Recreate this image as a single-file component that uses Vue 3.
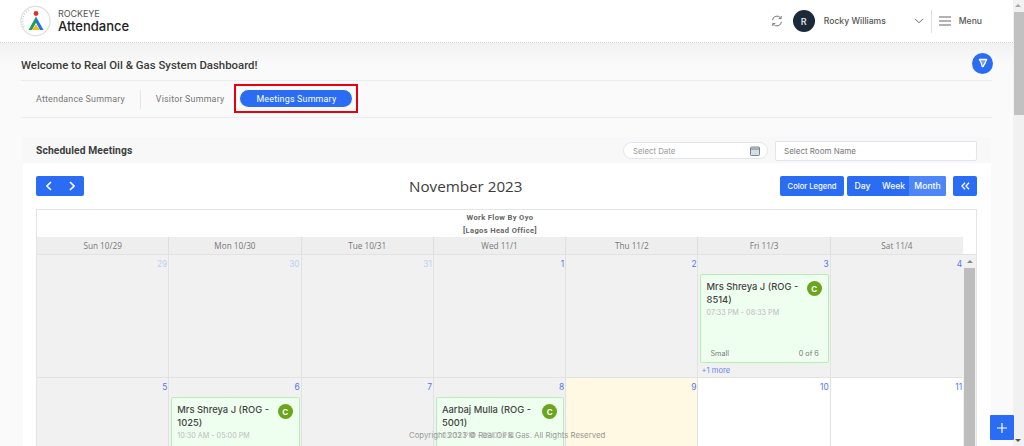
<script setup>
const days = ['Sun 10/29','Mon 10/30','Tue 10/31','Wed 11/1','Thu 11/2','Fri 11/3','Sat 11/4']
const rows = [
  [
    { n: 29, faded: true }, { n: 30, faded: true }, { n: 31, faded: true }, { n: 1 }, { n: 2 },
    { n: 3, more: '+1 more', ev: { title: 'Mrs Shreya J (ROG - 8514)', time: '07:33 PM - 08:33 PM', room: 'Small', count: '0 of 6' } },
    { n: 4 }
  ],
  [
    { n: 5 },
    { n: 6, ev: { title: 'Mrs Shreya J (ROG - 1025)', time: '10:30 AM - 05:00 PM', room: 'Small', count: '0 of 6' } },
    { n: 7 },
    { n: 8, ev: { title: 'Aarbaj Mulla (ROG - 5001)', time: '03:33 PM - 09:01 PM', room: 'Small', count: '0 of 6' } },
    { n: 9, today: true }, { n: 10, free: true }, { n: 11, free: true }
  ]
]
</script>

<template>
  <div class="page">
    <div class="main">
      <header class="topbar">
        <div class="brand">
          <svg class="logo" width="32" height="32" viewBox="0 0 32 32">
            <circle cx="15.5" cy="16" r="14.6" fill="#fff" stroke="#dedede" stroke-width="1.2" />
            <path d="M4 22 A13 13 0 0 1 9 5" fill="none" stroke="#c4c4c4" stroke-width="1.2" stroke-dasharray="1 1.6" />
            <circle cx="16" cy="8.5" r="2.4" fill="#d9342b" />
            <path d="M16 11.5 L8.5 25 H12 L16 17.8 Z" fill="#1f9d55" />
            <path d="M16 11.5 L23.5 25 H20 L16 17.8 Z" fill="#1e73e8" />
            <path d="M12.2 25 L16 19.5 L19.8 25 Z" fill="#f6b91a" />
          </svg>
          <div class="brand-text">
            <span class="brand-top">ROCKEYE</span>
            <span class="brand-name">Attendance</span>
          </div>
        </div>
        <div class="top-right">
          <svg class="sync" width="12" height="12" viewBox="0 0 12 12" fill="none" stroke="#777" stroke-width="1">
            <path d="M1.5 5.2 A4.5 4.5 0 0 1 9.8 3.2" />
            <path d="M10.2 1 V3.6 H7.7" />
            <path d="M10.5 6.8 A4.5 4.5 0 0 1 2.2 8.8" />
            <path d="M1.8 11 V8.4 H4.3" />
          </svg>
          <span class="avatar">R</span>
          <span class="user">Rocky Williams</span>
          <svg class="chev" width="10" height="6" viewBox="0 0 10 6" fill="none" stroke="#666" stroke-width="1">
            <path d="M1 .8 5 4.8 9 .8" />
          </svg>
          <span class="vline"></span>
          <svg class="burger" width="12" height="10" viewBox="0 0 12 10" stroke="#666" stroke-width="1">
            <path d="M0 1h12M0 5h12M0 9h12" />
          </svg>
          <span class="menu">Menu</span>
        </div>
      </header>

      <div class="content">
        <div class="welcome">
          <h1>Welcome to Real Oil &amp; Gas System Dashboard!</h1>
          <span class="filter">
            <svg width="10" height="10" viewBox="0 0 10 10" fill="#fff" fill-opacity=".35" stroke="#fff" stroke-width="1.3" stroke-linejoin="round">
              <path d="M1.4 1.5 H8.6 L7.2 4.8 L5 8.6 H4.2 L3.2 4.8 Z" />
            </svg>
          </span>
        </div>

        <nav class="tabs">
          <span class="tab">Attendance Summary</span>
          <span class="tab-sep"></span>
          <span class="tab">Visitor Summary</span>
          <span class="tab-active-box"><span class="tab-active">Meetings Summary</span></span>
        </nav>

        <section class="card">
          <div class="card-head">
            <h2>Scheduled Meetings</h2>
            <div class="date-input">
              <span>Select Date</span>
              <svg width="10" height="10" viewBox="0 0 10 10">
                <rect x=".5" y="1" width="9" height="8.5" rx="1" fill="#cfe0e6" stroke="#667" stroke-width=".8" />
                <path d="M.5 3h9" stroke="#667" stroke-width=".8" />
              </svg>
            </div>
            <div class="room-input">Select Room Name</div>
          </div>

          <div class="cal-toolbar">
            <div class="btn nav-btn">
              <svg width="6" height="10" viewBox="0 0 6 10" fill="none" stroke="#fff" stroke-width="1.6"><path d="M5 1 1 5l4 4" /></svg>
              <svg width="6" height="10" viewBox="0 0 6 10" fill="none" stroke="#fff" stroke-width="1.6"><path d="M1 1l4 4-4 4" /></svg>
            </div>
            <div class="cal-title">November 2023</div>
            <div class="tool-right">
              <div class="btn legend">Color Legend</div>
              <div class="btn views">
                <span class="view">Day</span>
                <span class="view">Week</span>
                <span class="view view-on">Month</span>
              </div>
              <div class="btn collapse">
                <svg width="9" height="8" viewBox="0 0 9 8" fill="none" stroke="#fff" stroke-width="1.3"><path d="M4 .8 1 4l3 3.2M8 .8 5 4l3 3.2" /></svg>
              </div>
            </div>
          </div>

          <div class="calendar">
            <div class="res">Work Flow By Oyo</div>
            <div class="res res-2">[Lagos Head Office]</div>
            <div class="col-heads">
              <div v-for="d in days" :key="d" class="col-head">{{ d }}</div>
              <div class="col-gap"></div>
            </div>
            <div class="cal-body">
              <div class="weeks">
                <div v-for="(r, i) in rows" :key="i" class="week">
                  <div
                    v-for="c in r"
                    :key="c.n"
                    class="cell"
                    :class="{ today: c.today, free: c.free }"
                  >
                    <div class="num" :class="{ faded: c.faded }">{{ c.n }}</div>
                    <div v-if="c.ev" class="event">
                      <span class="badge">C</span>
                      <div class="ev-title">{{ c.ev.title }}</div>
                      <div class="ev-time">{{ c.ev.time }}</div>
                      <div class="ev-foot"><span>{{ c.ev.room }}</span><span>{{ c.ev.count }}</span></div>
                    </div>
                    <div v-if="c.more" class="more">{{ c.more }}</div>
                  </div>
                </div>
              </div>
              <div class="cal-scroll">
                <span class="up"></span>
                <span class="cal-thumb"></span>
              </div>
            </div>
          </div>
        </section>
      </div>
    </div>

    <aside class="page-scroll">
      <span class="up page-up"></span>
      <span class="page-thumb"></span>
      <span class="down"></span>
    </aside>

    <div class="copyright">Copyright 2023 © Real Oil &amp; Gas. All Rights Reserved</div>
    <div class="plus">
      <svg width="10" height="10" viewBox="0 0 10 10" stroke="#fff" stroke-width="1.2"><path d="M5 0v10M0 5h10" /></svg>
    </div>
  </div>
</template>

<style>
html, body { margin: 0; overflow: hidden; }
</style>

<style scoped>
.page {
  position: relative;
  display: flex;
  width: 1024px;
  height: 446px;
  overflow: hidden;
  font-family: Inter, "Open Sans", sans-serif;
  background: #fafafa;
}
.main { width: 1013px; flex: none; }

.topbar {
  height: 42px;
  box-sizing: content-box;
  border-bottom: 1px dotted #d4d4d4;
  background: #fff;
  display: flex;
  align-items: center;
  justify-content: space-between;
  padding-left: 20px;
  padding-right: 31px;
}
.brand { display: flex; align-items: center; gap: 6px; }
.logo { display: block; }
.brand-text { display: flex; flex-direction: column; }
.brand-top { font-size: 9px; line-height: 11px; color: #555; letter-spacing: -.1px; }
.brand-name { font-size: 13px; line-height: 15px; font-weight: 500; color: #222; }
.top-right { display: flex; align-items: center; height: 100%; }
.sync { margin-right: 10px; }
.avatar {
  width: 22px; height: 22px; border-radius: 50%;
  background: #1b2a38; color: #ddd;
  font-size: 9px; font-weight: 600;
  display: flex; align-items: center; justify-content: center;
}
.user { margin-left: 9px; width: 90px; font-size: 8.6px; font-weight: 500; color: #555; }
.chev { margin-left: 0; }
.vline { width: 1px; height: 23px; background: #ddd; margin: 0 7px 0 7px; }
.burger { margin-right: 8px; }
.menu { font-size: 8.6px; font-weight: 500; color: #555; }

.content {
  padding: 0 21px 0 21px;
  background: linear-gradient(#f1f1f1 0, #fafafa 22px);
}
.welcome {
  height: 38px;
  display: flex;
  align-items: center;
  justify-content: space-between;
  border-bottom: 1px solid #ececec;
  padding-top: 7px;
  box-sizing: border-box;
}
h1 {
  margin: 0;
  font-family: Roboto, sans-serif;
  font-size: 11.4px;
  font-weight: 500;
  color: #3a3a3a;
}
.filter {
  width: 21px; height: 21px; border-radius: 50%;
  background: #2a6df4;
  margin-right: -1px; margin-top: -4px;
  display: flex; align-items: center; justify-content: center;
}
.tabs {
  height: 37px;
  display: flex;
  align-items: center;
  border-bottom: 1px solid #ececec;
  box-sizing: border-box;
  padding-left: 15px;
  font-family: Roboto, sans-serif;
  font-size: 8.9px;
  letter-spacing: .2px;
  color: #777;
}
.tab-sep { width: 1px; height: 19px; background: #e6e6e6; margin: 0 15px; }
.tab-active-box {
  margin: 0 0 1px 10px;
  border: 2px solid #e8000f;
  padding: 4px;
  display: flex;
}
.tab-active {
  width: 112px; height: 17px;
  border-radius: 9px;
  background: #2a6df4;
  color: #fff;
  display: flex; align-items: center; justify-content: center;
}

.card {
  margin: 19px 0 0 2px;
  width: 968px;
  background: #fff;
}
.card-head {
  height: 26px;
  background: #f8f8f8;
  display: flex;
  align-items: center;
  padding-left: 13px;
}
h2 {
  margin: 0;
  flex: 1;
  font-family: Roboto, sans-serif;
  font-size: 10.3px;
  font-weight: 700;
  color: #3d3d3d;
  letter-spacing: .1px;
}
.date-input {
  width: 145px; height: 17px; box-sizing: border-box;
  margin-top: 1px;
  border: 1px solid #e2e6ea; border-radius: 9px;
  background: #fff;
  display: flex; align-items: center; justify-content: space-between;
  padding: 0 7px 0 9px;
  font-size: 7.8px; color: #999;
}
.room-input {
  width: 202px; height: 20px; box-sizing: border-box;
  margin: 1px 14px 0 7px;
  border: 1px solid #e2e6ea; border-radius: 2px;
  background: #fff;
  display: flex; align-items: center;
  padding-left: 8px;
  font-size: 8px; color: #777;
}

.cal-toolbar {
  margin: 13px 14px 0 13px;
  height: 20px;
  display: flex;
  align-items: center;
}
.btn {
  height: 20px; box-sizing: border-box;
  background: #2a6df4;
  border-radius: 2px;
  color: #fff;
  display: flex; align-items: center; justify-content: center;
}
.nav-btn { width: 48px; gap: 17px; }
.cal-title {
  margin-left: 325px;
  font-family: "Open Sans", sans-serif;
  font-size: 15.2px;
  color: #3c3c3c;
}
.tool-right { margin-left: auto; display: flex; justify-content: flex-end; }
.legend { width: 64px; font-size: 7.6px; font-weight: 500; margin-right: 3px; }
.views { width: 99px; font-size: 8.6px; font-weight: 500; margin-right: 7px; justify-content: flex-start; overflow: hidden; }
.view { width: 31px; height: 100%; display: flex; align-items: center; justify-content: center; }
.view-on { width: 37px; background: #4d86f7; }
.collapse { width: 24px; }

.calendar {
  margin: 13px 14px 0 13px;
  border: 1px solid #e4e4e4;
  border-bottom: 0;
}
.res {
  width: 926px;
  text-align: center;
  font-family: Roboto, sans-serif;
  font-size: 7.6px;
  font-weight: 700;
  letter-spacing: .35px;
  color: #666;
  height: 13px;
  line-height: 13px;
  padding-top: 1px;
}
.res-2 { padding-top: 0; height: 13px; }
.col-heads { display: flex; height: 17px; margin-top: 0; border-bottom: 1px solid #e2e2e2; }
.col-head {
  width: 132.3px;
  box-sizing: border-box;
  background: #eee;
  border-right: 1px solid #dedede;
  font-family: "Open Sans", sans-serif;
  font-size: 8.2px;
  line-height: 17px;
  color: #777;
  text-align: center;
}
.col-head:nth-child(7) { border-right: 0; }
.col-gap { flex: 1; }
.cal-body { display: flex; }
.weeks { width: 926px; flex: none; }
.week { display: flex; height: 122px; border-bottom: 1px solid #e2e2e2; }
.cell {
  position: relative;
  width: 132.3px;
  box-sizing: border-box;
  flex: none;
  background: #f1f1f1;
  border-right: 1px solid #e2e2e2;
  padding: 4px 0 0 2px;
}
.cell:last-child { border-right: 0; }
.today { background: #fff8e3; }
.free { background: #fff; }
.num { height: 14px; padding-right: 1px; text-align: right; font-size: 8.4px; line-height: 11px; color: #5577f0; }
.faded { color: #c3cef5; }
.event {
  position: relative;
  height: 89px;
  box-sizing: border-box;
  margin: 1px 1px 0 0;
  background: #efffef;
  border: 1px solid #b5efb5;
  border-radius: 2px;
  padding: 6px 24px 0 5px;
  color: #444;
}
.badge {
  position: absolute; top: 6px; right: 6px;
  width: 15px; height: 15px; border-radius: 50%;
  background: #6aa51d; color: #fff;
  font-size: 8px; font-weight: 700;
  display: flex; align-items: center; justify-content: center;
}
.ev-title { font-size: 9.4px; line-height: 12.5px; font-weight: 500; color: #444; }
.ev-time { margin-top: 1px; font-size: 7.2px; line-height: 11px; color: #bbb; white-space: nowrap; }
.ev-foot {
  position: absolute; left: 9px; right: 9px; bottom: 3px;
  display: flex; justify-content: space-between;
  font-size: 7.2px; line-height: 10px; color: #777;
}
.more { margin-top: 3px; padding-left: 1px; font-size: 7.6px; line-height: 10px; color: #6a85ee; }
.cal-scroll {
  position: relative;
  flex: 1;
  background: #f1f1f1;
}
.up {
  position: absolute; top: 5px; left: 4px;
  width: 0; height: 0;
  border: 3px solid transparent; border-top: 0;
  border-bottom: 3px solid #888;
}
.cal-thumb { position: absolute; top: 13px; left: 1px; right: 1px; bottom: 0; background: #bdbdbd; }

.page-scroll { position: relative; flex: 1; background: #f1f1f1; }
.page-up { top: 4px; left: 2px; border-bottom-color: #a5a5a5; }
.page-thumb { position: absolute; top: 12px; left: 1px; right: 0; height: 103px; background: #c1c1c1; }
.down {
  position: absolute; bottom: 4px; left: 2px;
  width: 0; height: 0;
  border: 3px solid transparent; border-bottom: 0;
  border-top: 3px solid #555;
}

.copyright {
  position: absolute; left: 409px; top: 429px;
  font-size: 7.8px; line-height: 12px;
  color: #999;
  white-space: nowrap;
}
.plus {
  position: absolute; left: 990px; top: 415px;
  width: 24px; height: 25px;
  background: #2a6df4;
  border-radius: 1px;
  display: flex; align-items: center; justify-content: center;
}
</style>
